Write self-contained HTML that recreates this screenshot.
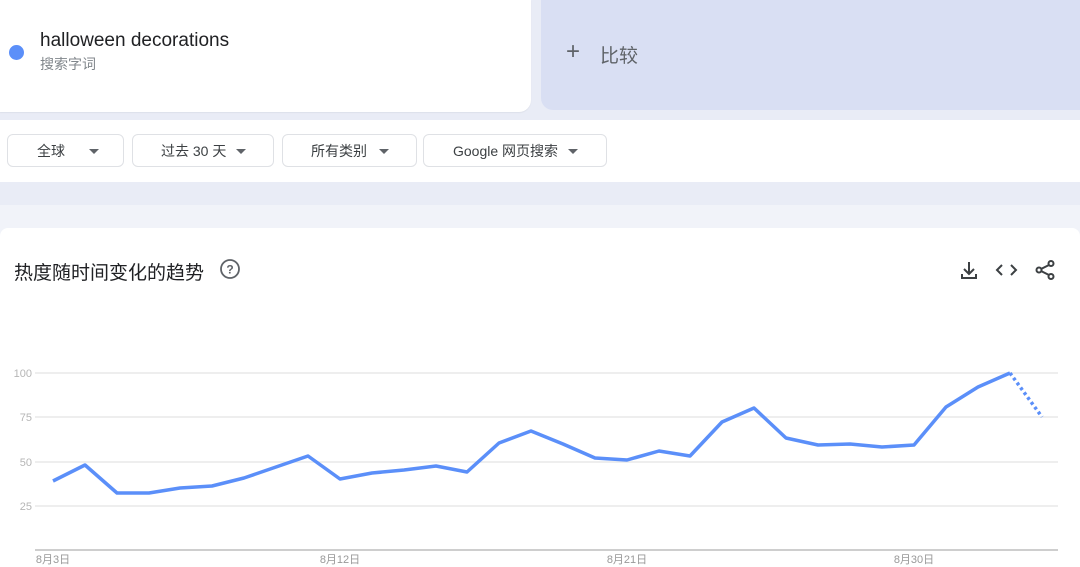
<!DOCTYPE html>
<html><head><meta charset="utf-8"><style>
body{margin:0;width:1080px;height:567px;overflow:hidden;background:#e9ecf6;font-family:"Liberation Sans","Noto Sans CJK SC",sans-serif;position:relative}
.a{position:absolute}
.btn{position:absolute;top:134px;height:33px;border:1px solid #dfe1e5;border-radius:6px;background:#fff;font-size:14px;color:#3c4043;line-height:33px;box-sizing:border-box}
.tri{position:absolute;top:14px;width:0;height:0;border-left:5px solid transparent;border-right:5px solid transparent;border-top:5px solid #5f6368}
</style></head><body>
<div class="a" style="left:0;top:0;width:531px;height:112px;background:#fff;border-radius:0 0 12px 0;box-shadow:0 1px 1px #dde0ea"></div>
<div class="a" style="left:9px;top:45px;width:15px;height:15px;border-radius:50%;background:#5b8ff9"></div>
<div class="a" style="left:40px;top:30px;font-size:19px;color:#202124">halloween decorations</div>
<div class="a" style="left:40px;top:54px;font-size:14px;color:#80868b">搜索字词</div>
<div class="a" style="left:541px;top:0;width:539px;height:110px;background:#d9dff3;border-radius:0 0 0 12px"></div>
<div class="a" style="left:566px;top:38px;font-size:24px;color:#5f6368;font-weight:300">+</div>
<div class="a" style="left:600px;top:41px;font-size:19px;color:#5f6368">比较</div>
<div class="a" style="left:0;top:120px;width:1080px;height:62px;background:#fff"></div>
<div class="btn" style="left:7px;width:117px"><span class="a" style="left:29px">全球</span><span class="tri" style="left:81px"></span></div>
<div class="btn" style="left:132px;width:142px"><span class="a" style="left:28px">过去 30 天</span><span class="tri" style="left:103px"></span></div>
<div class="btn" style="left:282px;width:135px"><span class="a" style="left:28px">所有类别</span><span class="tri" style="left:96px"></span></div>
<div class="btn" style="left:423px;width:184px"><span class="a" style="left:29px">Google 网页搜索</span><span class="tri" style="left:144px"></span></div>
<div class="a" style="left:0;top:205px;width:1080px;height:30px;background:#f1f3f9"></div>
<div class="a" style="left:0;top:228px;width:1080px;height:339px;background:#fff;border-radius:8px 8px 0 0"></div>
<div class="a" style="left:14px;top:258px;font-size:19px;color:#202124">热度随时间变化的趋势</div>
<svg class="a" style="left:219px;top:258px" width="22" height="22" viewBox="0 0 22 22"><circle cx="11" cy="11" r="9" fill="none" stroke="#5f6368" stroke-width="1.8"/><text x="11" y="15.5" font-size="12" text-anchor="middle" fill="#5f6368" font-family="Liberation Sans" font-weight="bold">?</text></svg>
<svg class="a" style="left:955px;top:256px" width="100" height="30" viewBox="0 0 100 30"><g fill="none" stroke="#3c4043" stroke-width="2"><path d="M14 6v12M9 13l5 5 5-5M7 18v4h14v-4"/><path d="M47 9l-5 5 5 5M56 9l5 5-5 5"/><path d="M96 8L84 14l12 6"/></g><g fill="#fff" stroke="#3c4043" stroke-width="2"><circle cx="96" cy="7.5" r="2.5"/><circle cx="84" cy="14" r="2.5"/><circle cx="96" cy="20.5" r="2.5"/></g></svg>
<svg class="a" style="left:0;top:0" width="1080" height="567">
<g stroke="#e8e8e8" stroke-width="1.5"><line x1="35" y1="373" x2="1058" y2="373"/><line x1="35" y1="417" x2="1058" y2="417"/><line x1="35" y1="462" x2="1058" y2="462"/><line x1="35" y1="506" x2="1058" y2="506"/></g>
<line x1="35" y1="550" x2="1058" y2="550" stroke="#bdbdbd" stroke-width="1.5"/>
<g font-family="Liberation Sans" font-size="11" fill="#b6b6b6" text-anchor="end"><text x="32" y="377">100</text><text x="32" y="421">75</text><text x="32" y="466">50</text><text x="32" y="510">25</text></g>
<g font-family="Liberation Sans,Noto Sans CJK SC,sans-serif" font-size="11" fill="#999" text-anchor="middle"><text x="53" y="563">8月3日</text><text x="340" y="563">8月12日</text><text x="627" y="563">8月21日</text><text x="914" y="563">8月30日</text></g>
<polyline fill="none" stroke="#5b8ff9" stroke-width="3.5" stroke-linejoin="round" points="53,481 85,465 117,493 149,493 180,488 212,486 244,478 276,467 308,456 340,479 372,473 404,470 436,466 467,472 499,443 531,431 563,444 595,458 627,460 659,451 690,456 722,422 754,408 786,438 818,445 850,444 882,447 914,445 946,407 978,387 1010,373"/>
<line x1="1010" y1="373" x2="1042" y2="417" stroke="#5b8ff9" stroke-width="3.5" stroke-dasharray="3,3"/>
</svg>
</body></html>
